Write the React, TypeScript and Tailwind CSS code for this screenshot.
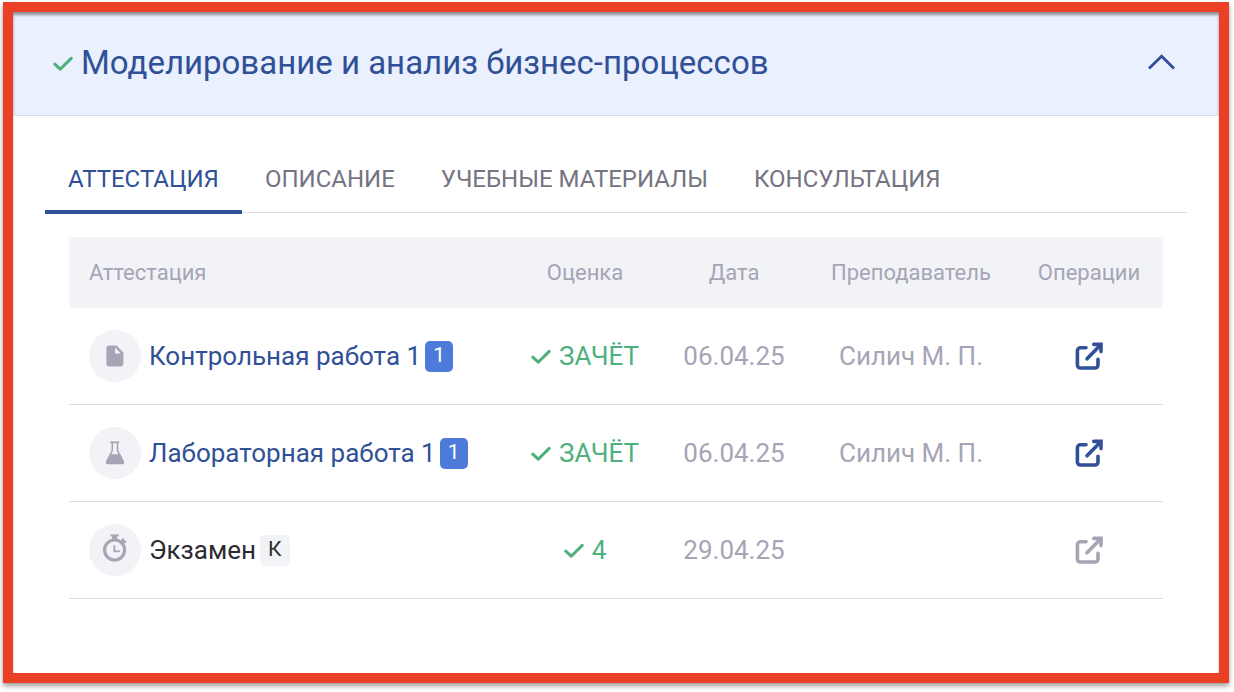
import { useState } from "react"
import type { ReactNode } from "react"

type Work = {
  title: string
  badge: string
  icon: ReactNode
  grade: string
  date: string
  teacher: string
  isOpen: boolean
}

const TABS = ["АТТЕСТАЦИЯ", "ОПИСАНИЕ", "УЧЕБНЫЕ МАТЕРИАЛЫ", "КОНСУЛЬТАЦИЯ"]

function CheckIcon() {
  return (
    <svg width="20" height="16" viewBox="0 0 20 16" fill="none" className="shrink-0" aria-hidden="true">
      <path d="M1.8 9.2 7.2 14.2 18.2 3.4" stroke="#4eb07c" strokeWidth="3" strokeLinecap="round" strokeLinejoin="round" />
    </svg>
  )
}

function ChevronIcon({ isOpen }: { isOpen: boolean }) {
  return (
    <svg width="28" height="18" viewBox="0 0 28 18" fill="none" className={isOpen ? "" : "rotate-180"} aria-hidden="true">
      <path d="M2 14.6 14.6 2.2 27 14.6" stroke="#305097" strokeWidth="2.8" />
    </svg>
  )
}

function FileIcon() {
  return (
    <svg width="18" height="22" viewBox="0 0 18 22" aria-hidden="true">
      <path d="M2.6 0.5H10.6L17.4 7.6V19A2.4 2.4 0 0 1 15 21.4H2.6A2.4 2.4 0 0 1 .4 19V2.9A2.4 2.4 0 0 1 2.6.5Z" fill="#a5a5b5" />
      <path d="M9 2.4V8.6H14.8Z" fill="#f2f3f7" />
    </svg>
  )
}

function FlaskIcon() {
  return (
    <svg width="20" height="24" viewBox="0 0 20 24" fill="none" aria-hidden="true">
      <path d="M5.4 1.3H14.2" stroke="#a5a5b5" strokeWidth="1.7" />
      <path d="M7.3 1.5V9.5L1.8 20.3C1.3 21.6 1.8 22.4 3 22.4H17C18.2 22.4 18.7 21.6 18.2 20.3L12.5 9.5V1.5" stroke="#a5a5b5" strokeWidth="1.6" />
      <path d="M5.2 13.2H14.6L18.8 20.6C19.3 22 18.6 23 17.2 23H2.8C1.4 23 .7 22 1.2 20.6Z" fill="#a5a5b5" />
    </svg>
  )
}

function StopwatchIcon() {
  return (
    <svg width="26" height="32" viewBox="0 0 26 32" fill="none" stroke="#a5a5b5" aria-hidden="true">
      <circle cx="12.6" cy="16" r="10" strokeWidth="3.2" />
      <path d="M8.4 1.4H16.8" strokeWidth="2" />
      <path d="M12.6 2V6" strokeWidth="5" />
      <path d="M19.8 8.8 22 6.6" strokeWidth="2.6" />
      <path d="M19.8 4.8 23.8 8.6" strokeWidth="2.4" />
      <path d="M12.4 11.2V17.4H18" strokeWidth="1.8" />
    </svg>
  )
}

function OpenIcon() {
  return (
    <svg width="28" height="28" viewBox="0 0 28 28" fill="none" stroke="currentColor" strokeWidth="3.6" strokeLinecap="round" strokeLinejoin="round" aria-hidden="true">
      <path d="M11 5.8H5.4A3 3 0 0 0 2.4 8.8V23A3 3 0 0 0 5.4 26H20A3 3 0 0 0 23 23V17.2" />
      <path d="M12 16.8 25 3.6" />
      <path d="M18.8 2.4H26V9.6" strokeLinejoin="miter" />
    </svg>
  )
}

const WORKS: Work[] = [
  { title: "Контрольная работа 1", badge: "1", icon: <FileIcon />, grade: "ЗАЧЁТ", date: "06.04.25", teacher: "Силич М. П.", isOpen: true },
  { title: "Лабораторная работа 1", badge: "1", icon: <FlaskIcon />, grade: "ЗАЧЁТ", date: "06.04.25", teacher: "Силич М. П.", isOpen: true },
  { title: "Экзамен", badge: "К", icon: <StopwatchIcon />, grade: "4", date: "29.04.25", teacher: "", isOpen: false },
]

function WorkRow({ work }: { work: Work }) {
  return (
    <tr className="h-[97px] text-center text-[26px] text-[#a5a5b5] *:border-b *:border-[#dcdce2]">
      <td className="pl-5">
        <div className="flex items-center gap-2 whitespace-nowrap">
          <span className="flex size-[52px] shrink-0 items-center justify-center rounded-full bg-[#f2f3f7]">{work.icon}</span>
          <div className="flex items-center gap-1">
            {work.isOpen ? (
              <a href="#work" className="text-[#305097]">{work.title}</a>
            ) : (
              <span className="text-[#2b2b31]">{work.title}</span>
            )}
            <span className={`flex h-[31px] min-w-7 items-center justify-center rounded-[5px] px-2 text-[21px] ${work.isOpen ? "bg-[#4e7ad9] text-white" : "bg-[#f2f3f7] text-[#2b2b31]"}`}>
              {work.badge}
            </span>
          </div>
        </div>
      </td>
      <td>
        <div className="flex items-center justify-center gap-2 text-[#4eb07c]">
          <CheckIcon />
          <span>{work.grade}</span>
        </div>
      </td>
      <td>{work.date}</td>
      <td>{work.teacher}</td>
      <td>
        <button type="button" disabled={!work.isOpen} aria-label="Открыть" className="mx-auto block text-[#305097] disabled:text-[#a5a5b5]">
          <OpenIcon />
        </button>
      </td>
    </tr>
  )
}

export default function App() {
  const [isOpen, setIsOpen] = useState(true)
  const [activeTab, setActiveTab] = useState(TABS[0])

  return (
    <div className="bg-white pt-0.5 pr-[5px] pb-2 pl-[3px] font-[Roboto,sans-serif]">
      <section className="border-10 border-[#ea4025] shadow-[0_3px_5px_rgba(0,0,0,0.4)]">
        <h2 className="border-b border-[#d6dae6] bg-[#eaf0fd] shadow-[inset_0_3px_3px_rgba(0,0,0,0.4)]">
          <button
            type="button"
            aria-expanded={isOpen}
            onClick={() => setIsOpen(!isOpen)}
            className="flex h-[103px] w-full items-center justify-between pr-11 pb-0.5 pl-10 text-left"
          >
            <span className="flex items-center gap-2 text-[33px] text-[#305097]">
              <CheckIcon />
              Моделирование и анализ бизнес-процессов
            </span>
            <ChevronIcon isOpen={isOpen} />
          </button>
        </h2>

        {isOpen && (
          <div className="px-8 pt-8 pb-[74px] shadow-[inset_2px_0_1px_-1px_rgba(0,0,0,0.12),inset_-2px_0_1px_-1px_rgba(0,0,0,0.12)]">
            <div role="tablist" className="flex border-b border-[#dcdce2]">
              {TABS.map((tab) => (
                <button
                  key={tab}
                  type="button"
                  role="tab"
                  aria-selected={tab === activeTab}
                  onClick={() => setActiveTab(tab)}
                  className={`-mb-0.5 h-[66px] border-b-4 px-[23px] text-2xl ${tab === activeTab ? "border-[#305097] text-[#305097]" : "border-transparent text-[#747483]"}`}
                >
                  {tab}
                </button>
              ))}
            </div>

            {/* Works table */}
            <div className="px-6 pt-6">
              <table className="w-full table-fixed border-separate border-spacing-0">
                <thead>
                  <tr className="h-[71px] text-[22px] text-[#a5a5b5]">
                    <th className="rounded-l-[5px] bg-[#f2f3f7] pl-5 text-left font-normal">Аттестация</th>
                    <th className="w-[152px] bg-[#f2f3f7] font-normal">Оценка</th>
                    <th className="w-[146px] bg-[#f2f3f7] font-normal">Дата</th>
                    <th className="w-[208px] bg-[#f2f3f7] font-normal">Преподаватель</th>
                    <th className="w-[148px] rounded-r-[5px] bg-[#f2f3f7] font-normal">Операции</th>
                  </tr>
                </thead>
                <tbody>
                  {WORKS.map((work) => (
                    <WorkRow key={work.title} work={work} />
                  ))}
                </tbody>
              </table>
            </div>
          </div>
        )}
      </section>
    </div>
  )
}
